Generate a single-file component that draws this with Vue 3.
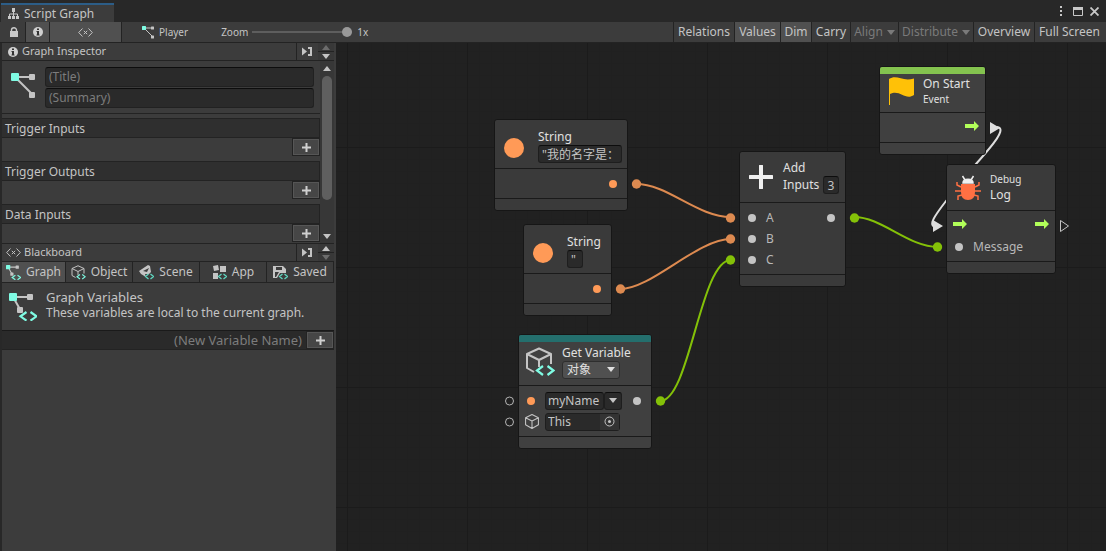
<script setup>
import { ref } from 'vue'

const zoom = ref(100)
const title = ref('')
const summary = ref('')
const newVariable = ref('')
const firstString = ref('"我的名字是：')
const secondString = ref('"')
const inputCount = ref('3')
const variableName = ref('myName')
const target = ref('This')

const tools = ref([
  { name: 'Relations', on: false, width: 'w-relations' },
  { name: 'Values', on: true, width: 'w-values' },
  { name: 'Dim', on: true, width: 'w-dim' },
  { name: 'Carry', on: false, width: 'w-carry' },
  { name: 'Align', menu: true, width: 'w-align' },
  { name: 'Distribute', menu: true, width: 'w-distribute' },
  { name: 'Overview', on: false, width: 'w-overview' },
  { name: 'Full Screen', on: false, width: 'w-full' },
])

const sections = ['Trigger Inputs', 'Trigger Outputs', 'Data Inputs']
const scopes = ['Graph', 'Object', 'Scene', 'App', 'Saved']
const scope = ref('Graph')
</script>

<template>
  <div class="window">
    <svg class="defs" aria-hidden="true">
      <symbol id="graph" viewBox="0 0 26 26">
        <path d="M4 4H22M4 4L22 22" stroke="#c4c4c4" stroke-width="2" />
        <rect x="0" y="0" width="8" height="8" rx="1" fill="#7ffbe3" />
        <rect x="18" y="1" width="6" height="6" rx="1" fill="#c4c4c4" />
        <rect x="18" y="19" width="6" height="6" rx="1" fill="#c4c4c4" />
      </symbol>
      <symbol id="graph-var" viewBox="0 0 28 28">
        <path d="M4 4H22M4 4L12 18" stroke="#c4c4c4" stroke-width="2" />
        <rect x="0" y="0" width="8" height="8" rx="1" fill="#7ffbe3" />
        <rect x="18" y="1" width="6" height="6" rx="1" fill="#c4c4c4" />
        <rect x="8" y="14" width="6" height="6" rx="1" fill="#c4c4c4" />
        <path d="M17.500 19L11.500 23.300L17.500 27.600M21.500 19L27.500 23.300L21.500 27.600" fill="none" stroke="#7ffbe3" stroke-width="2.200" />
      </symbol>
      <symbol id="cube" viewBox="0 0 26 28">
        <path d="M13 1L25 7V20L13 27L1 20V7ZM1 7L13 13L25 7M13 13V27" fill="none" stroke="#c4c4c4" stroke-width="2" stroke-linejoin="round" />
      </symbol>
      <symbol id="cube-var" viewBox="0 0 30 30">
        <path d="M9 25L2 21V7L14 1.500L26 7V17M2 7L14 13L26 7M14 13V20" fill="none" stroke="#c4c4c4" stroke-width="2" stroke-linejoin="round" />
        <path d="M18 19L12 23.500L18 28M22.500 19L28.500 23.500L22.500 28" fill="none" stroke="#7ffbe3" stroke-width="2.200" />
      </symbol>
      <symbol id="info" viewBox="0 0 10 10">
        <circle cx="5" cy="5" r="5" fill="#d0d0d0" />
        <path d="M4 1.500H6V3H4ZM3.500 4H6V7.500H6.500V8.500H3.500V7.500H4V5H3.500Z" fill="#333" />
      </symbol>
      <symbol id="vars" viewBox="0 0 15 9">
        <path d="M4.500 .5L.7 4.500L4.500 8.500M10.500 .5L14.300 4.500L10.500 8.500M5.800 2.800L9.200 6.200M9.200 2.800L5.800 6.200" fill="none" stroke="#c4c4c4" />
      </symbol>
      <symbol id="plus" viewBox="0 0 9 9">
        <path d="M4.500 0V9M0 4.500H9" stroke="#d0d0d0" stroke-width="2" />
      </symbol>
      <symbol id="dock" viewBox="0 0 11 9">
        <path d="M0 .5L5 4.500L0 8.500Z" fill="#c4c4c4" />
        <path d="M6 1H9V8H6" fill="none" stroke="#c4c4c4" stroke-width="2" />
      </symbol>
      <symbol id="flow" viewBox="0 0 14 10">
        <path d="M0 3H9V0L14 5L9 10V7H0Z" fill="#b2ff59" />
      </symbol>
    </svg>

    <header class="titlebar">
      <div class="tab">
        <svg width="11" height="11" viewBox="0 0 11 11">
          <path d="M5.500 3V9M1.500 8V6H9.500V8" fill="none" stroke="#c8c8c8" />
          <path d="M4 0H7V4H4ZM0 8H3V11H0ZM4 8H7V11H4ZM8 8H11V11H8Z" fill="#c8c8c8" />
        </svg>
        <span>Script Graph</span>
      </div>
      <div class="window-buttons">
        <button aria-label="Menu"><svg width="3" height="11" viewBox="0 0 3 11"><path d="M0 0H2V2H0ZM0 4H2V6H0ZM0 8H2V10H0Z" fill="#c8c8c8" /></svg></button>
        <button aria-label="Maximize"><svg width="10" height="9" viewBox="0 0 10 9"><path d="M.5 .5H9.500V8.500H.5Z" fill="none" stroke="#c8c8c8" /><path d="M0 0H10V3H0Z" fill="#c8c8c8" /></svg></button>
        <button aria-label="Close"><svg width="9" height="9" viewBox="0 0 9 9"><path d="M.5 .5L8.500 8.500M8.500 .5L.5 8.500" stroke="#c8c8c8" stroke-width="1.800" /></svg></button>
      </div>
    </header>

    <div class="toolbar">
      <button class="tool lock" aria-label="Lock">
        <svg width="8" height="10" viewBox="0 0 8 10"><path d="M0 4H8V10H0Z" fill="#c8c8c8" /><path d="M1.500 5V3A2.500 2.200 0 0 1 6.500 3V5" fill="none" stroke="#c8c8c8" stroke-width="1.400" /></svg>
      </button>
      <button class="tool info on" aria-label="Graph Inspector" aria-pressed="true"><svg width="10" height="10"><use href="#info" /></svg></button>
      <button class="tool vars on" aria-label="Blackboard" aria-pressed="true"><svg width="15" height="9"><use href="#vars" /></svg></button>
      <button class="crumb"><svg width="13" height="13"><use href="#graph" /></svg>Player</button>
      <label class="zoom-label" for="zoom">Zoom</label>
      <input id="zoom" v-model="zoom" class="zoom" type="range" min="0" max="100" />
      <span class="small">1x</span>
      <div class="tools">
        <button v-for="t in tools" :key="t.name" class="tool" :class="[t.width, { on: t.on, off: t.menu }]" :disabled="t.menu" @click="t.on = !t.on">
          {{ t.name }}<span v-if="t.menu" class="caret"></span>
        </button>
      </div>
    </div>

    <main class="body">
      <aside class="sidebar">
        <div class="panel-head">
          <svg width="10" height="10"><use href="#info" /></svg>
          <h2>Graph Inspector</h2>
          <button class="dock" aria-label="Dock Graph Inspector"><svg width="11" height="9"><use href="#dock" /></svg></button>
          <div class="stepper">
            <button aria-label="Move inspector up" disabled><span class="up"></span></button>
            <button aria-label="Move inspector down"><span class="down"></span></button>
          </div>
        </div>
        <div class="inspector">
          <div class="inspector-main">
            <div class="identity">
              <svg width="26" height="26"><use href="#graph" /></svg>
              <div class="fields">
                <input v-model="title" aria-label="Title" placeholder="(Title)" />
                <input v-model="summary" aria-label="Summary" placeholder="(Summary)" />
              </div>
            </div>
            <section v-for="s in sections" :key="s" class="ports-section">
              <h3>{{ s }}</h3>
              <button class="add" :aria-label="'Add to ' + s"><svg width="9" height="9"><use href="#plus" /></svg></button>
            </section>
          </div>
          <div class="scrollbar">
            <span class="up"></span>
            <div class="thumb"></div>
            <span class="down"></span>
          </div>
        </div>

        <div class="panel-head blackboard">
          <svg width="15" height="9"><use href="#vars" /></svg>
          <h2>Blackboard</h2>
          <button class="dock" aria-label="Dock Blackboard"><svg width="11" height="9"><use href="#dock" /></svg></button>
          <div class="stepper">
            <button aria-label="Move blackboard up"><span class="up"></span></button>
            <button aria-label="Move blackboard down" disabled><span class="down"></span></button>
          </div>
        </div>
        <nav class="scopes">
          <button v-for="s in scopes" :key="s" :class="{ on: s === scope }" @click="scope = s">
            <svg v-if="s === 'Graph'" width="15" height="15"><use href="#graph-var" /></svg>
            <svg v-else-if="s === 'Object'" width="15" height="15"><use href="#cube-var" /></svg>
            <svg v-else width="15" height="15" viewBox="0 0 15 15">
              <path v-if="s === 'Scene'" d="M0 6L9 0L11 1L12 7L10 9H6L7 12L2 9ZM4 6L8 7L10 3Z" fill="#c4c4c4" fill-rule="evenodd" />
              <path v-else-if="s === 'App'" d="M1 1L6 0L7 5L2 6ZM8 1H14V7H8ZM1 8H6V14H1Z" fill="#c4c4c4" />
              <path v-else d="M0 1H10L13 4V8H7L4 13H0ZM3 2V5H9V2ZM2 7V12H3L6 7Z" fill="#c4c4c4" fill-rule="evenodd" />
              <path d="M9.500 9L6.500 11.500L9.500 14M11.500 9L14.500 11.500L11.500 14" fill="none" stroke="#5fd6bf" stroke-width="1.300" />
            </svg>
            <span>{{ s }}</span>
          </button>
        </nav>
        <div class="about">
          <svg width="28" height="28" viewBox="0 0 28 28"><use href="#graph-var" /></svg>
          <div>
            <h3>Graph Variables</h3>
            <p>These variables are local to the current graph.</p>
          </div>
        </div>
        <div class="new-variable">
          <input v-model="newVariable" aria-label="New variable name" placeholder="(New Variable Name)" />
          <button class="add" aria-label="Add variable"><svg width="9" height="9"><use href="#plus" /></svg></button>
        </div>
      </aside>

      <div class="canvas">
        <svg class="wires" aria-hidden="true">
          <g transform="translate(-336 -43)" fill="none" stroke-width="2">
            <g stroke="#dd8a50">
              <path d="M636 184C668 184 697 217 731 217" />
              <path d="M620 289C652 289 697 239 731 239" />
            </g>
            <g stroke="#84c108">
              <path d="M660 401C690 401 700 260 731 260" />
              <path d="M854 217C882 217 908 247 938 247" />
            </g>
            <path d="M997 127C1008 128 991 147 976 164L946 201C936 214 926 227 937 227" stroke="#dedede" />
            <g stroke="none" fill="#dd8a50">
              <circle cx="636.500" cy="184" r="4.700" /><circle cx="620.500" cy="289" r="4.700" />
              <circle cx="730.500" cy="218" r="4.700" /><circle cx="730.500" cy="239" r="4.700" />
            </g>
            <g stroke="none" fill="#84c108">
              <circle cx="660.500" cy="401" r="4.700" /><circle cx="730.500" cy="260" r="4.700" />
              <circle cx="854.500" cy="218" r="4.700" /><circle cx="937.500" cy="247" r="4.700" />
            </g>
            <path d="M990 122L1000 128L990 134ZM933 220L943 226L933 232Z" fill="#dedede" stroke="none" />
            <path d="M1060.500 220.500L1068.500 226L1060.500 231.500Z" stroke="#c4c4c4" stroke-width="1" />
            <circle cx="509.500" cy="401" r="4" stroke="#b4b4b4" stroke-width="1" />
            <circle cx="509.500" cy="422" r="4" stroke="#b4b4b4" stroke-width="1" />
          </g>
        </svg>

        <article class="node first-string">
          <header>
            <span class="literal"></span>
            <div class="caption">
              <h4>String</h4>
              <input v-model="firstString" class="field long" aria-label="First string" />
            </div>
          </header>
          <div class="ports"><div class="port out"><i class="dot orange"></i></div></div>
          <footer></footer>
        </article>

        <article class="node second-string">
          <header>
            <span class="literal"></span>
            <div class="caption">
              <h4>String</h4>
              <input v-model="secondString" class="field tiny" aria-label="Second string" />
            </div>
          </header>
          <div class="ports"><div class="port out"><i class="dot orange"></i></div></div>
          <footer></footer>
        </article>

        <article class="node get-variable bright">
          <header>
            <svg width="30" height="30"><use href="#cube-var" /></svg>
            <div class="caption">
              <h4>Get Variable</h4>
              <div class="kind">
                <select aria-label="Variable kind"><option>对象</option></select>
                <span class="caret"></span>
              </div>
            </div>
          </header>
          <div class="ports">
            <div class="port">
              <i class="dot orange"></i>
              <div class="combo">
                <input v-model="variableName" class="field name" aria-label="Variable name" />
                <button class="field" aria-label="Choose variable"><span class="caret"></span></button>
              </div>
              <i class="dot end"></i>
            </div>
            <div class="port object-port">
              <svg width="14" height="15"><use href="#cube" /></svg>
              <div class="combo object">
                <input v-model="target" class="field" aria-label="Object" />
                <button class="picker" aria-label="Pick object"><svg width="11" height="11" viewBox="0 0 11 11"><circle cx="5.500" cy="5.500" r="4.500" fill="none" stroke="#c4c4c4" /><circle cx="5.500" cy="5.500" r="1.500" fill="#c4c4c4" /></svg></button>
              </div>
            </div>
          </div>
          <footer></footer>
        </article>

        <article class="node add-node">
          <header>
            <svg width="24" height="24" viewBox="0 0 24 24"><path d="M12 1V23M1 12H23" stroke="#f0f0f0" stroke-width="4" stroke-linecap="round" /></svg>
            <div class="caption">
              <h4>Add</h4>
              <label>Inputs <input v-model="inputCount" class="field count" /></label>
            </div>
          </header>
          <div class="ports">
            <div class="port"><i class="dot"></i><span>A</span><i class="dot end"></i></div>
            <div class="port"><i class="dot"></i><span>B</span></div>
            <div class="port"><i class="dot"></i><span>C</span></div>
          </div>
          <footer></footer>
        </article>

        <article class="node on-start bright">
          <header>
            <svg width="26" height="28" viewBox="0 0 26 28"><path d="M1 2C9 -3 14 5 26 1.500V18C17 24 12 12 2 17V28H1Z" fill="#ffc107" /></svg>
            <div class="caption">
              <h4>On Start</h4>
              <p>Event</p>
            </div>
          </header>
          <div class="ports"><div class="port out flow"><svg width="14" height="10"><use href="#flow" /></svg></div></div>
          <footer></footer>
        </article>

        <article class="node log">
          <header>
            <svg width="26" height="26" viewBox="0 0 26 26">
              <path d="M8 8C8 3 18 3 18 8ZM7.500 1L10 5M18.500 1L16 5" fill="#f0f0f0" stroke="#f0f0f0" stroke-width="1.500" />
              <path d="M6 9H20V17Q20 25 13 25Q6 25 6 17Z" fill="#ff7043" />
              <path d="M6 12L2 10V7M0 16H6M7 20L3 21V25M20 12L24 10V7M20 16H26M19 20L23 21V25" fill="none" stroke="#ff7043" stroke-width="1.500" />
            </svg>
            <div class="caption">
              <p>Debug</p>
              <h4>Log</h4>
            </div>
          </header>
          <div class="ports">
            <div class="port flow"><svg width="14" height="10"><use href="#flow" /></svg><svg class="end" width="14" height="10"><use href="#flow" /></svg></div>
            <div class="port"><i class="dot"></i><span>Message</span></div>
          </div>
          <footer></footer>
        </article>
      </div>
    </main>
  </div>
</template>

<style>
html, body { margin: 0; background: #212121; }
</style>

<style scoped>
* { box-sizing: border-box; }
.window {
  height: 100vh;
  display: flex;
  flex-direction: column;
  overflow: hidden;
  background: #282828;
  color: #c4c4c4;
  font: 12px/16px "Noto Sans", "Noto Sans CJK SC", sans-serif;
}
.defs { position: absolute; width: 0; height: 0; }
h2, h3, h4, p { margin: 0; font-weight: 400; font-size: 12px; }
button, input, select { font: inherit; color: inherit; border: 0; padding: 0; margin: 0; border-radius: 0; background: none; min-width: 0; outline: 0; }
svg { display: block; flex: none; }
input::placeholder { color: #7c7c7c; opacity: 1; }

.titlebar { display: flex; justify-content: space-between; align-items: flex-end; height: 22px; flex: none; padding-left: 1px; }
.tab { display: flex; align-items: center; gap: 5px; width: 113px; height: 19px; padding-left: 7px; background: #3c3c3c; border-top: 2px solid #2c5d87; }
.window-buttons { display: flex; align-items: center; gap: 7px; height: 22px; padding-right: 7px; }
.window-buttons button { display: flex; }
.window-buttons button:first-child { margin-right: 3px; }

.toolbar { display: flex; align-items: center; height: 21px; flex: none; background: #3c3c3c; border-bottom: 1px solid #232323; padding-left: 2px; }
.tool { display: flex; align-items: center; justify-content: center; gap: 4px; height: 20px; border-right: 1px solid #232323; }
.tool.on { background: #505050; }
.tool.off { color: #7a7a7a; }
.lock { width: 24px; }
.info { width: 24px; }
.vars { width: 72px; }
.crumb { display: flex; align-items: center; gap: 4px; margin-left: 20px; font-size: 10px; }
.zoom-label { margin-left: 33px; font-size: 10px; }
.small { margin-left: 5px; font-size: 10px; }
.zoom { appearance: none; width: 100px; height: 20px; margin-left: 4px; cursor: pointer; }
.zoom::-webkit-slider-runnable-track { height: 2px; background: #5e5e5e; }
.zoom::-webkit-slider-thumb { appearance: none; width: 10px; height: 10px; margin-top: -4px; border-radius: 50%; background: #999; }
.tools { display: flex; margin-left: auto; border-left: 1px solid #232323; }
.tools .tool:last-child { border-right: 0; }
.w-relations { width: 61px; }
.w-values { width: 46px; }
.w-dim { width: 31px; }
.w-carry { width: 39px; }
.w-align { width: 48px; }
.w-distribute { width: 75px; }
.w-overview { width: 61px; }
.w-full { width: 71px; padding-right: 2px; }
.caret, .down { width: 0; height: 0; border: 4px solid transparent; border-top: 5px solid currentColor; border-bottom: 0; }
.up { width: 0; height: 0; border: 4px solid transparent; border-bottom: 5px solid currentColor; border-top: 0; }

.body { flex: 1; display: flex; min-height: 0; }
.sidebar { width: 336px; flex: none; display: flex; flex-direction: column; padding-right: 2px; background: #3c3c3c; border-left: 2px solid #282828; }
.panel-head { display: flex; align-items: center; height: 18px; flex: none; padding-left: 6px; gap: 4px; border-bottom: 1px solid #232323; }
.panel-head.blackboard { height: 19px; padding-left: 4px; gap: 3px; border-top: 1px solid #232323; }
.panel-head h2 { flex: 1; padding-bottom: 2px; font-size: 11px; }
.dock { display: flex; align-items: center; justify-content: center; align-self: stretch; width: 22px; border-left: 1px solid #232323; }
.stepper { display: flex; flex-direction: column; align-self: stretch; width: 16px; margin-left: -4px; background: #232323; gap: 1px; }
.blackboard .stepper { margin-left: -3px; }
.stepper button { flex: 1; display: flex; align-items: center; justify-content: center; background: #383838; }
.stepper button:disabled { color: #6c6c6c; }

.inspector { display: flex; flex: none; height: 182px; overflow: hidden; }
.inspector-main { flex: 1; min-width: 0; }
.identity { display: flex; align-items: flex-start; gap: 8px; height: 53px; padding: 6px 6px 0 9px; border-bottom: 1px solid #232323; margin-bottom: 4px; }
.identity > svg { margin-top: 6px; }
.fields { flex: 1; display: flex; flex-direction: column; gap: 1px; }
.fields input { height: 20px; width: 100%; padding: 0 3px 2px; background: #2a2a2a; border: 1px solid #212121; border-top-color: #0d0d0d; border-radius: 3px; }
.ports-section { height: 43px; display: flex; flex-direction: column; }
.ports-section h3 { height: 20px; padding: 2px 3px 0; background: #2f2f2f; border: 1px solid #232323; border-left: 0; line-height: 16px; }
.ports-section .add { align-self: flex-end; }
.add { display: flex; align-items: center; justify-content: center; width: 28px; height: 18px; flex: none; background: #464646; border: 1px solid #232323; box-shadow: inset 0 0 0 1px #565656; }
.scrollbar { display: flex; flex-direction: column; align-items: center; width: 14px; padding: 5px 0 4px; background: #373737; }
.thumb { width: 10px; height: 124px; margin: 5px 0 auto; border-radius: 5px; background: #5f5f5f; }

.scopes { display: grid; grid-template-columns: 64px 67px 67px 67px 1fr; height: 21px; flex: none; border-bottom: 1px solid #232323; }
.scopes button { display: flex; align-items: center; justify-content: center; gap: 5px; border-right: 1px solid #232323; }
.scopes .on { background: #505050; }
.about { display: flex; gap: 9px; height: 48px; flex: none; padding: 6px 7px; border-bottom: 1px solid #1a1a1a; }
.about svg { margin-top: 4px; }
.about h3 { font-size: 13px; }
.new-variable { display: flex; height: 19px; flex: none; background: #2a2a2a; border-bottom: 1px solid #232323; }
.new-variable input { flex: 1; text-align: right; padding-right: 4px; font-size: 13px; }

.canvas {
  position: relative;
  flex: 1;
  overflow: hidden;
  background-color: #212121;
  background-image:
    linear-gradient(90deg, #1b1b1b 1px, transparent 1px),
    linear-gradient(#1b1b1b 1px, transparent 1px),
    linear-gradient(90deg, #202020 1px, transparent 1px),
    linear-gradient(#202020 1px, transparent 1px);
  background-size: 120px 120px, 120px 120px, 12px 12px, 12px 12px;
  background-position: 11px 104px;
}
.wires { position: absolute; inset: 0; width: 100%; height: 100%; }

.node { position: absolute; display: flex; flex-direction: column; background: #3a3a3a; border: 1px solid #161616; border-radius: 3px; overflow: hidden; color: #e0e0e0; }
.node.bright { background: #404040; }
.first-string { left: 158px; top: 76px; width: 134px; }
.second-string { left: 187px; top: 181px; width: 89px; }
.get-variable { left: 182px; top: 291px; width: 134px; }
.add-node { left: 403px; top: 108px; width: 107px; }
.on-start { left: 543px; top: 23px; width: 107px; }
.log { left: 610px; top: 121px; width: 110px; }
.node header { display: flex; align-items: center; height: 48px; padding-left: 9px; gap: 14px; }
.node footer { height: 12px; border-top: 1px solid #1a1a1a; }
.get-variable header { height: 50px; padding: 0 0 4px 6px; border-top: 7px solid #246f6d; gap: 7px; }
.on-start header { height: 45px; padding: 0 0 4px 8px; border-top: 7px solid #84c34f; gap: 9px; }
.add-node header { height: 50px; gap: 10px; }
.log header { height: 45px; padding-left: 8px; gap: 9px; }
.log h4 { line-height: 18px; }
.ports { border-top: 1px solid #1a1a1a; padding: 4px 0; color: #b8b8b8; }
.port { display: flex; align-items: center; height: 21px; padding: 0 10px 0 8px; }
.port.out { justify-content: flex-end; }
.port.flow { padding: 0 6px 4px; }
.port span { margin-left: 10px; }
.end { margin-left: auto; }
.dot { flex: none; width: 8px; height: 8px; border-radius: 50%; background: #c4c4c4; }
.dot.orange { background: #ff9a57; }
.literal { flex: none; width: 20px; height: 20px; margin-top: 8px; border-radius: 50%; background: #ff9a57; }
.caption p { font-size: 10px; line-height: 14px; }
.field { display: block; height: 18px; padding: 0 3px; background: #2a2a2a; border: 1px solid #1e1e1e; border-top-color: #0d0d0d; border-radius: 3px; color: #c4c4c4; }
.long { width: 84px; }
.tiny { width: 16px; }
.first-string .caption, .second-string .caption { padding-top: 4px; }
.caption label { display: flex; align-items: center; gap: 4px; }
.count { width: 16px; }
.kind { position: relative; width: 58px; }
.kind select { appearance: none; display: block; width: 58px; height: 18px; padding-left: 4px; background: #505050; border: 1px solid #2e2e2e; border-radius: 3px; color: #e0e0e0; }
.kind .caret { position: absolute; right: 5px; top: 6px; pointer-events: none; }
.combo { display: flex; width: 77px; margin-left: 10px; }
.combo .name { width: 59px; padding: 0 2px; }
.combo button.field { display: flex; align-items: center; justify-content: center; width: 18px; }
.combo .caret { margin: 0; }
.combo.object { width: 75px; margin-left: 6px; background: #2a2a2a; border: 1px solid #1e1e1e; border-radius: 3px; }
.object .field { flex: 1; height: 16px; border: 0; background: none; padding: 0 2px; }
.object-port { padding-left: 6px; }
.picker { display: flex; align-items: center; justify-content: center; width: 19px; background: #333; }
</style>
